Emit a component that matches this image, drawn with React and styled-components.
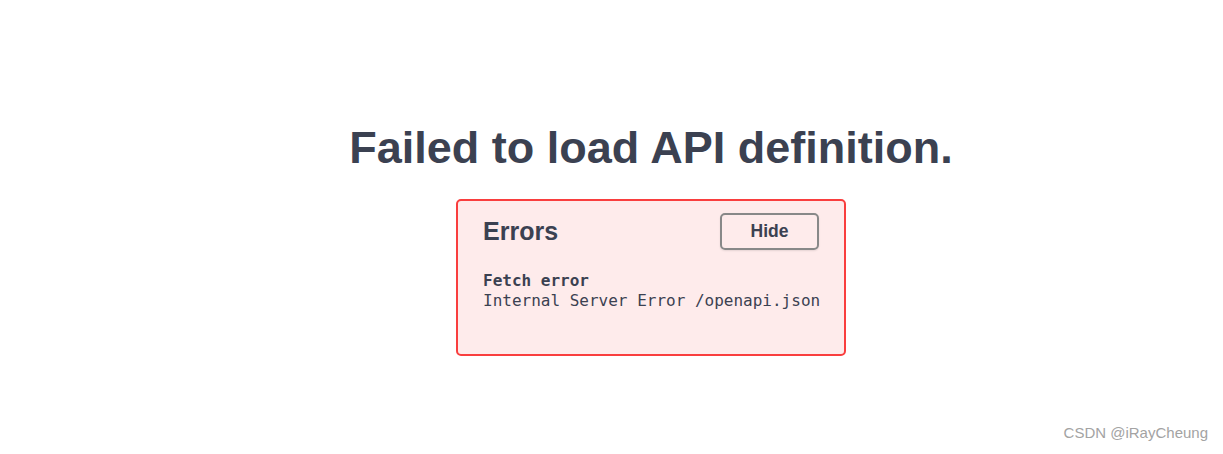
import React from "react";
import styled, { createGlobalStyle } from "styled-components";

const GlobalStyle = createGlobalStyle`
    html, body {
        margin: 0;
        padding: 0;
        background: #ffffff;
    }
    body {
        font-family: "Liberation Sans", Arial, sans-serif;
        color: #3b4151;
    }
`;

const Page = styled.div`
    position: relative;
    min-height: 454px;
    box-sizing: border-box;
    padding: 122px 0 0 79px;
    display: flex;
    flex-direction: column;
    align-items: center;
`;

const Title = styled.h4`
    margin: 0;
    font-size: 45px;
    line-height: 52px;
    font-weight: 700;
    color: #3b4151;
`;

const ErrorsWrapper = styled.div`
    box-sizing: border-box;
    width: 390px;
    margin-top: 25px;
    padding: 12px 25px 43px 25px;
    border: 2px solid #f93e3e;
    border-radius: 5px;
    background: rgba(249, 62, 62, 0.1);
`;

const Header = styled.hgroup`
    display: flex;
    align-items: center;
    margin: 0;
`;

const HeaderTitle = styled.h4`
    flex: 1;
    margin: 0;
    font-size: 25px;
    font-weight: 700;
    color: #3b4151;
`;

const Button = styled.button`
    box-sizing: border-box;
    width: 99px;
    height: 37px;
    padding: 0;
    border: 2px solid #888888;
    border-radius: 5px;
    background: transparent;
    box-shadow: 0 1px 2px rgba(0, 0, 0, 0.1);
    font-family: "Liberation Sans", Arial, sans-serif;
    font-size: 17.5px;
    font-weight: 700;
    color: #3b4151;
    cursor: pointer;
`;

const ErrorList = styled.div`
    margin-top: 21px;
    font-family: "DejaVu Sans Mono", "Liberation Mono", monospace;
    font-size: 16px;
    line-height: 20px;
    color: #3b4151;
`;

const ErrorTitle = styled.h4`
    margin: 0;
    font-size: 16px;
    font-weight: 700;
`;

const ErrorMessage = styled.span`
    display: block;
    white-space: pre;
`;

const Watermark = styled.div`
    position: absolute;
    right: 15px;
    bottom: 13px;
    font-size: 15px;
    color: #a3a3a3;
`;

export default function App() {
    return (
        <>
            <GlobalStyle />
            <Page>
                <Title>Failed to load API definition.</Title>
                <ErrorsWrapper>
                    <Header>
                        <HeaderTitle>Errors</HeaderTitle>
                        <Button>Hide</Button>
                    </Header>
                    <ErrorList>
                        <ErrorTitle>Fetch error</ErrorTitle>
                        <ErrorMessage>Internal Server Error /openapi.json</ErrorMessage>
                    </ErrorList>
                </ErrorsWrapper>
                <Watermark>CSDN @iRayCheung</Watermark>
            </Page>
        </>
    );
}
